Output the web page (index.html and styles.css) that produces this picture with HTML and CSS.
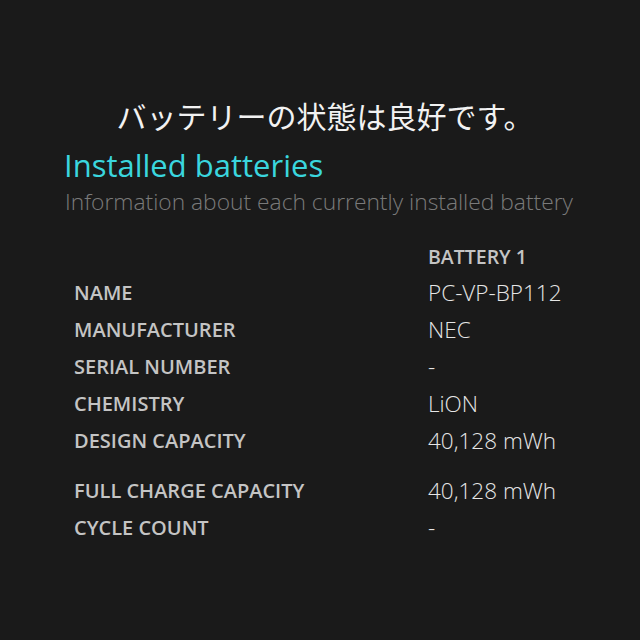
FILE: index.html
```html
<!DOCTYPE html>
<html lang="ja">
<head>
<meta charset="utf-8">
<link rel="stylesheet" href="styles.css">
</head>
<body>
<div class="page">
  <h1 class="status">バッテリーの状態は良好です。</h1>
  <h2 class="heading">Installed batteries</h2>
  <p class="sub">Information about each currently installed battery</p>
  <div class="table">
    <div class="row head"><span class="label"></span><span class="col">BATTERY 1</span></div>
    <div class="row"><span class="label">NAME</span><span class="value">PC-VP-BP112</span></div>
    <div class="row"><span class="label">MANUFACTURER</span><span class="value">NEC</span></div>
    <div class="row"><span class="label">SERIAL NUMBER</span><span class="value">-</span></div>
    <div class="row"><span class="label">CHEMISTRY</span><span class="value">LiON</span></div>
    <div class="row"><span class="label">DESIGN CAPACITY</span><span class="value">40,128 mWh</span></div>
    <div class="row gap"><span class="label">FULL CHARGE CAPACITY</span><span class="value">40,128 mWh</span></div>
    <div class="row"><span class="label">CYCLE COUNT</span><span class="value">-</span></div>
  </div>
</div>
</body>
</html>
```
FILE: styles.css
```css
html, body {
  margin: 0;
  padding: 0;
  background: #1a1a1a;
  width: 640px;
  height: 640px;
  overflow: hidden;
}
.page {
  padding: 93px 0 0 65px;
  font-family: "Open Sans", "Noto Sans", sans-serif;
}
.status {
  margin: 0 0 0 -65px;
  padding-left: 10px;
  width: 630px;
  text-align: center;
  font-family: "Noto Sans CJK JP", sans-serif;
  font-weight: 400;
  font-size: 30px;
  line-height: 44px;
  color: #f2f2f2;
}
.heading {
  margin: 10px 0 0 -1px;
  font-weight: 400;
  font-size: 31px;
  line-height: 36px;
  color: #3ad6de;
}
.sub {
  margin: 0;
  font-weight: 300;
  font-size: 22.8px;
  line-height: 38px;
  color: #7a7a7a;
  white-space: nowrap;
}
.table {
  margin-top: 18px;
  padding-left: 9px;
}
.row {
  display: grid;
  grid-template-columns: 354px 1fr;
  height: 37px;
  align-items: center;
}
.row.head {
  height: 35px;
}
.row.gap {
  margin-top: 13px;
}
.label, .col {
  font-weight: 600;
  font-size: 20px;
  color: #c4c4c4;
  white-space: nowrap;
}
.col {
  font-size: 19.5px;
}
.value {
  font-weight: 300;
  font-size: 22.5px;
  color: #e6e6e6;
  white-space: nowrap;
}
```
